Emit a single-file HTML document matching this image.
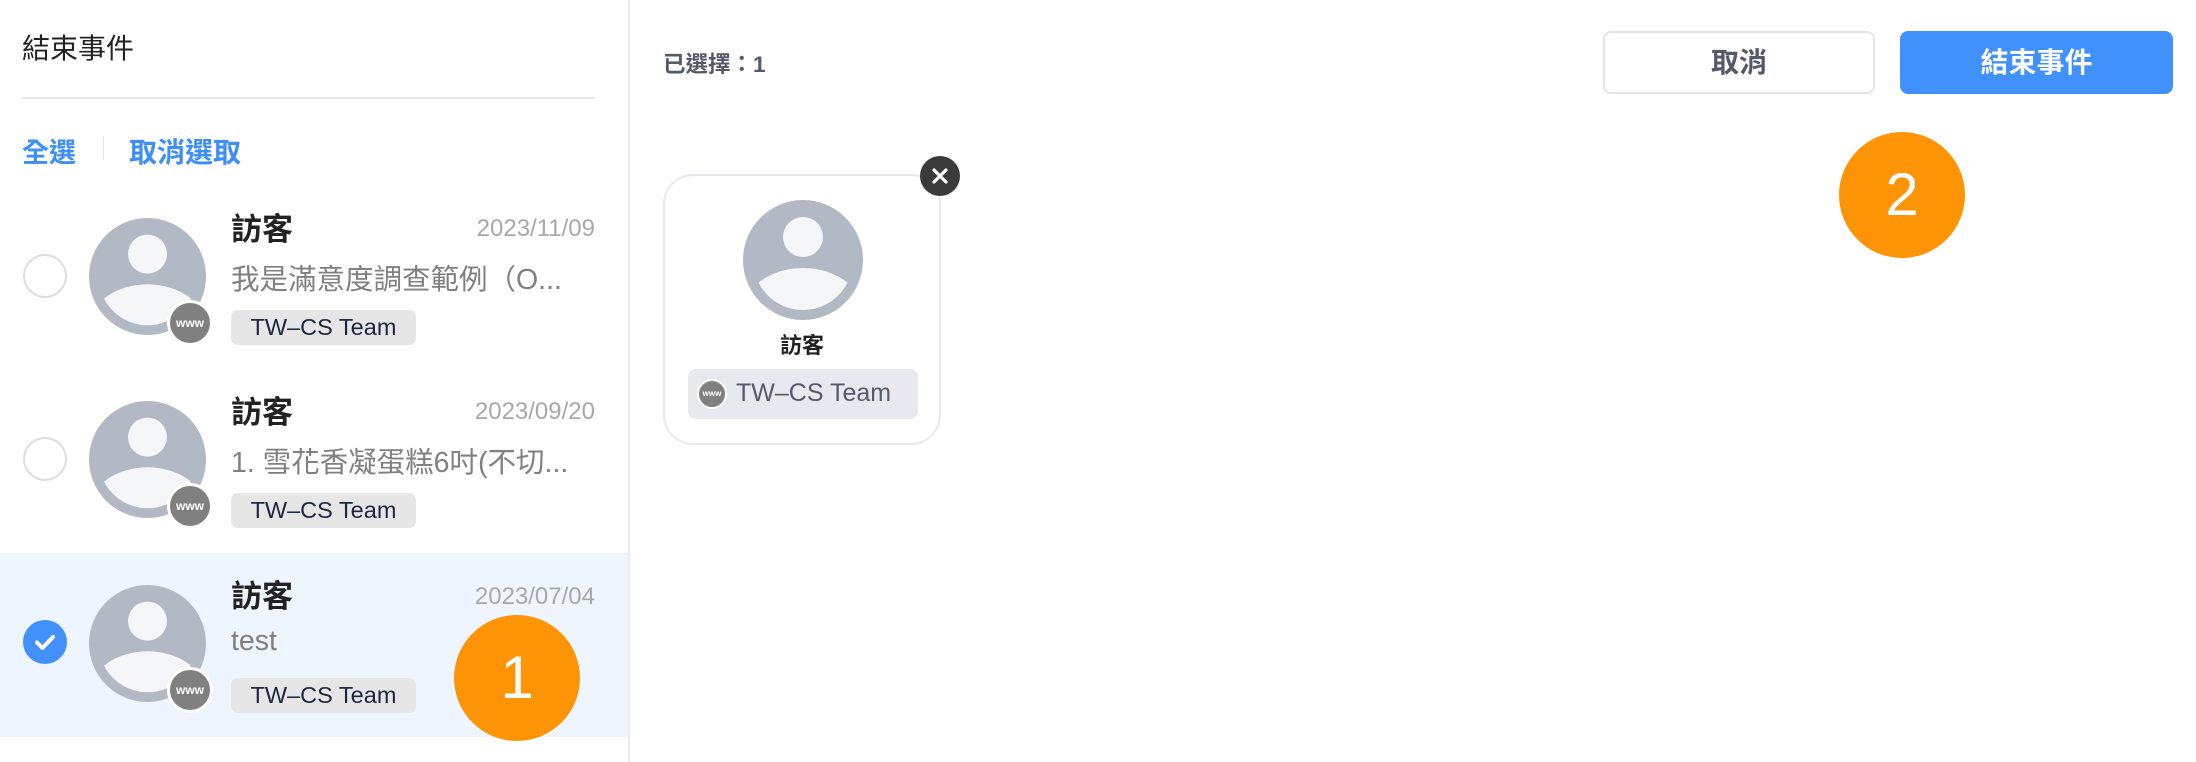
<!DOCTYPE html>
<html><head><meta charset="utf-8"><style>
*{margin:0;padding:0;box-sizing:border-box}
body{width:2196px;height:762px;background:#fff;position:relative;overflow:hidden;font-family:"Liberation Sans","Noto Sans CJK TC",sans-serif}
.a{position:absolute;white-space:nowrap}
.row{position:absolute;left:0;width:628px;height:184px}
.radio{position:absolute;left:23px;width:44px;height:44px;border-radius:50%;border:2px solid #ddd;background:#fff}
.av{position:absolute}
.www{position:absolute;width:46px;height:46px;border-radius:50%;background:#808080;border:3px solid #fff;color:#fff;font-size:12px;font-weight:bold;text-align:center;line-height:40px}
.name{position:absolute;left:231px;font-size:31px;font-weight:bold;color:#222}
.date{position:absolute;right:33px;font-size:24px;color:#a8a8a8}
.msg{position:absolute;left:231px;font-size:28.5px;color:#808080}
.tag{position:absolute;left:231px;width:185px;height:35px;border-radius:7px;background:#e6e6e6;color:#1d2640;font-size:23.5px;text-align:center;line-height:35px}
.orange{position:absolute;width:126px;height:126px;border-radius:50%;background:#fd9405;color:#fff;font-size:60px;text-align:center;line-height:126px}
</style></head><body>
<svg width="0" height="0" style="position:absolute"><defs>
<symbol id="av" viewBox="-60 -60 120 120"><circle r="60" fill="#b2b8c4"/><circle cy="-23" r="20" fill="#f5f6f8"/><clipPath id="cp"><circle r="50"/></clipPath><ellipse cy="56" rx="62" ry="48" fill="#f5f6f8" clip-path="url(#cp)"/></symbol>
</defs></svg>

<div class="a" style="left:22px;top:27px;font-size:28px;color:#222">結束事件</div>
<div class="a" style="left:22px;top:97px;width:573px;height:2px;background:#e8e8ec"></div>
<div class="a" style="left:22px;top:131px;font-size:27px;font-weight:bold;color:#3d8ef7">全選</div>
<div class="a" style="left:103px;top:136px;width:1px;height:24px;background:#e5e5e5"></div>
<div class="a" style="left:129px;top:131px;font-size:28px;font-weight:bold;color:#3d8ef7">取消選取</div>
<div class="a" style="left:628px;top:0;width:2px;height:762px;background:#ececec"></div>

<div class="row" style="top:185px">
<div class="radio" style="top:69px"></div>
<svg class="av" style="left:89px;top:33px" width="117" height="117"><use href="#av"/></svg>
<div class="www" style="left:167px;top:115px">www</div>
<div class="name" style="top:19px">訪客</div>
<div class="date" style="top:30px">2023/11/09</div>
<div class="msg" style="top:72px">我是滿意度調查範例（O...</div>
<div class="tag" style="top:125px">TW–CS Team</div>
</div>

<div class="row" style="top:368px">
<div class="radio" style="top:69px"></div>
<svg class="av" style="left:89px;top:33px" width="117" height="117"><use href="#av"/></svg>
<div class="www" style="left:167px;top:115px">www</div>
<div class="name" style="top:19px">訪客</div>
<div class="date" style="top:30px">2023/09/20</div>
<div class="msg" style="top:72px">1. 雪花香凝蛋糕6吋(不切...</div>
<div class="tag" style="top:125px">TW–CS Team</div>
</div>

<div class="row" style="top:553px;height:184px;background:#eef5fe">
<div class="radio" style="top:67px;border:none;background:#4190fb"><svg width="44" height="44" viewBox="0 0 44 44"><path d="M14 22.5l5.5 5.5 10.5-11" stroke="#fff" stroke-width="4" fill="none" stroke-linecap="round" stroke-linejoin="round"/></svg></div>
<svg class="av" style="left:89px;top:32px" width="117" height="117"><use href="#av"/></svg>
<div class="www" style="left:167px;top:114px">www</div>
<div class="name" style="top:18px">訪客</div>
<div class="date" style="top:30px">2023/07/04</div>
<div class="msg" style="top:72px">test</div>
<div class="tag" style="top:125px">TW–CS Team</div>
</div>
<div class="orange" style="left:454px;top:615px">1</div>

<div class="a" style="left:663px;top:47px;font-size:22.5px;font-weight:bold;color:#555a6a">已選擇：1</div>
<div class="a" style="left:1603px;top:31px;width:272px;height:63px;border:2px solid #e5e5e5;border-radius:8px;text-align:center;line-height:59px;font-size:28px;font-weight:bold;color:#555a6a">取消</div>
<div class="a" style="left:1900px;top:31px;width:273px;height:63px;background:#4191fd;border-radius:8px;text-align:center;line-height:63px;font-size:28px;font-weight:bold;color:#fff">結束事件</div>
<div class="orange" style="left:1839px;top:132px">2</div>

<div class="a" style="left:663px;top:174px;width:278px;height:271px;border:2px solid #e8e8ee;border-radius:30px;background:#fff"></div>
<svg class="av" style="left:743px;top:200px" width="120" height="120"><use href="#av"/></svg>
<div class="a" style="left:663px;width:278px;top:328px;text-align:center;font-size:22px;font-weight:bold;color:#222">訪客</div>
<div class="a" style="left:688px;top:369px;width:230px;height:50px;background:#e8e9ef;border-radius:8px"></div>
<div class="a" style="left:697px;top:379px;width:30px;height:30px;border-radius:50%;background:#808080;border:2px solid #fff;color:#fff;font-size:8px;font-weight:bold;text-align:center;line-height:26px">www</div>
<div class="a" style="left:736px;top:379px;font-size:25px;color:#555a6a">TW–CS Team</div>
<div class="a" style="left:920px;top:156px;width:40px;height:40px;border-radius:50%;background:#3a3a3a"><svg width="40" height="40" viewBox="0 0 40 40"><path d="M14 14l12 12M26 14l-12 12" stroke="#fff" stroke-width="3.2" stroke-linecap="round"/></svg></div>
</body></html>
